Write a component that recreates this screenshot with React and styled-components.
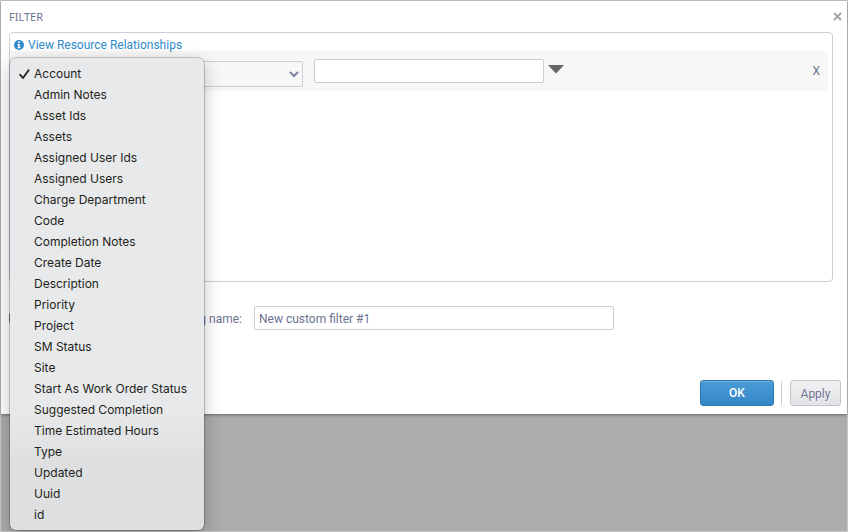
import React, { useState } from 'react'
import styled, { createGlobalStyle } from 'styled-components'

const FIELDS = [
    'Account',
    'Admin Notes',
    'Asset Ids',
    'Assets',
    'Assigned User Ids',
    'Assigned Users',
    'Charge Department',
    'Code',
    'Completion Notes',
    'Create Date',
    'Description',
    'Priority',
    'Project',
    'SM Status',
    'Site',
    'Start As Work Order Status',
    'Suggested Completion',
    'Time Estimated Hours',
    'Type',
    'Updated',
    'Uuid',
    'id',
]

const App = () => {
    const [field, setField] = useState('Account')
    const [value, setValue] = useState('')
    const [save, setSave] = useState(false)
    const [name, setName] = useState('New custom filter #1')

    return (
        <Page>
            <GlobalStyle />
            <Dialog role="dialog" aria-labelledby="filter-title">
                <Header>
                    <Title id="filter-title">FILTER</Title>
                    <CloseButton type="button" aria-label="Close">
                        <svg width="9" height="9" viewBox="0 0 9 9">
                            <path d="M1 1L8 8M8 1L1 8" stroke="#a3a3a3" strokeWidth="1.8" />
                        </svg>
                    </CloseButton>
                </Header>

                <Panel>
                    <HelpLink href="#relationships">
                        <svg width="10" height="10" viewBox="0 0 10 10">
                            <circle cx="5" cy="5" r="5" fill="#2f8bcc" />
                            <path d="M4.1 1.4h1.8v1.5H4.1zM3.4 4h2.5v3.2h.8v1.1H3.4V7.2h.8V5.1h-.8z" fill="#fff" />
                        </svg>
                        View Resource Relationships
                    </HelpLink>
                    <Rule>
                        <SelectWrap>
                            <FieldSelect aria-label="Field" value={field} onChange={e => setField(e.target.value)}>
                                {FIELDS.map(item => <option key={item}>{item}</option>)}
                            </FieldSelect>
                            <Chevron width="10" height="7" viewBox="0 0 10 7">
                                <path d="M1 1L5 5L9 1" fill="none" stroke="#7c83a3" strokeWidth="2" />
                            </Chevron>
                            <Menu role="listbox" aria-label="Field">
                                {FIELDS.map(item => (
                                    <MenuItem
                                        key={item}
                                        role="option"
                                        aria-selected={item === field}
                                        onClick={() => setField(item)}
                                    >
                                        <Tick>
                                            {item === field && (
                                                <svg width="11" height="10" viewBox="0 0 11 10">
                                                    <path
                                                        d="M1.2 5.8L4 9L9.6 1.2"
                                                        fill="none"
                                                        stroke="#1e1f20"
                                                        strokeWidth="1.8"
                                                        strokeLinecap="round"
                                                        strokeLinejoin="round"
                                                    />
                                                </svg>
                                            )}
                                        </Tick>
                                        {item}
                                    </MenuItem>
                                ))}
                            </Menu>
                        </SelectWrap>
                        <ValueInput aria-label="Value" value={value} onChange={e => setValue(e.target.value)} />
                        <DropButton type="button" aria-label="Show values">
                            <svg width="16" height="9" viewBox="0 0 16 9">
                                <path d="M0 0H16L8 8.5z" fill="#666" />
                            </svg>
                        </DropButton>
                        <RemoveButton type="button">X</RemoveButton>
                    </Rule>
                </Panel>

                <NameRow>
                    <Checkbox
                        type="checkbox"
                        aria-label="Save this filter"
                        checked={save}
                        onChange={e => setSave(e.target.checked)}
                    />
                    <NameLabel htmlFor="filter-name">Save filter using name:</NameLabel>
                    <NameInput id="filter-name" value={name} onChange={e => setName(e.target.value)} />
                </NameRow>

                <Footer>
                    <OkButton type="button">OK</OkButton>
                    <Divider />
                    <ApplyButton type="button">Apply</ApplyButton>
                </Footer>
            </Dialog>
        </Page>
    )
}

export default App


const GlobalStyle = createGlobalStyle`
* {
    box-sizing: border-box;
}

body {
    margin: 0;
}

body, button, input, select {
    font-family: Tahoma, Roboto, sans-serif;
    font-size: 12px;
    color: #6b7391;
}
`;

const Page = styled.div`
min-height: 100vh;
border: 1px solid #c8c8c8;
background-color: #acacac;
`;

const Dialog = styled.div`
background-color: white;
padding: 0 5px 8px 8px;
box-shadow: 0 1px 3px rgba(0, 0, 0, 0.4);
`;

const Header = styled.div`
display: flex;
align-items: center;
justify-content: space-between;
height: 31px;
`;

const Title = styled.h1`
margin: 0;
font-family: "Noto Sans", sans-serif;
font-size: 11px;
font-weight: normal;
`;

const PlainButton = styled.button`
display: flex;
padding: 0;
border: none;
background: none;
cursor: pointer;
`;

const CloseButton = styled(PlainButton)``;

const Panel = styled.div`
min-height: 250px;
margin-right: 9px;
padding: 4px;
border: 1px solid #cbccd8;
border-radius: 4px;
`;

const HelpLink = styled.a`
display: flex;
align-items: center;
gap: 4px;
height: 14px;
color: #2f8bcc;
text-decoration: none;
line-height: 14px;
padding-top: 1px;
`;

const Rule = styled.div`
display: flex;
align-items: flex-start;
height: 40px;
margin-left: -4px;
padding: 8px 8px 0 0;
background-color: #f7f7f7;
`;

const SelectWrap = styled.div`
position: relative;
flex: none;
width: 293px;
padding-top: 2px;
`;

const FieldSelect = styled.select`
appearance: none;
display: block;
width: 100%;
height: 26px;
padding: 0 24px 0 6px;
border: 1px solid #cbccd8;
border-radius: 2px;
background: #f7f7f7;
`;

const Chevron = styled.svg`
position: absolute;
top: 12px;
right: 4px;
pointer-events: none;
`;

const Menu = styled.ul`
position: absolute;
top: -1px;
left: 0;
z-index: 10;
width: 194px;
margin: 0;
padding: 5px 0;
border-radius: 6px;
list-style: none;
background: linear-gradient(#e8e9eb 74%, #dedfe1 86%);
box-shadow: 0 0 0 1px rgba(0, 0, 0, 0.2), 0 5px 18px rgba(0, 0, 0, 0.25);
color: #1e1f20;
font-family: Inter, sans-serif;
font-size: 12px;
`;

const MenuItem = styled.li`
display: flex;
align-items: center;
height: 21px;
white-space: nowrap;
cursor: default;
`;

const Tick = styled.span`
display: flex;
width: 24px;
padding-left: 9px;
`;

const TextInput = styled.input`
height: 24px;
padding: 2px 4px 0;
border: 1px solid #cbccd8;
border-radius: 2px;
background: white;
outline: 0;
`;

const ValueInput = styled(TextInput)`
flex: 0 1 230px;
margin-left: 11px;
`;

const DropButton = styled(PlainButton)`
margin: 6px 0 0 4px;
`;

const RemoveButton = styled(PlainButton)`
margin-left: auto;
padding-top: 5px;
`;

const NameRow = styled.div`
display: flex;
align-items: center;
margin-top: 24px;
`;

const Checkbox = styled.input`
width: 12px;
height: 12px;
margin: 0;
`;

const NameLabel = styled.label`
width: 221px;
margin-right: 12px;
padding-top: 2px;
text-align: right;
`;

const NameInput = styled(TextInput)`
flex: 0 1 360px;
`;

const Footer = styled.div`
display: flex;
align-items: center;
justify-content: flex-end;
margin: 50px 1px 0 0;
`;

const Button = styled.button`
height: 26px;
padding: 0;
border-radius: 3px;
`;

const OkButton = styled(Button)`
width: 74px;
border: 1px solid #2f78b0;
background: linear-gradient(#4a9cd8, #3486c6);
box-shadow: inset 0 1px 0 rgba(255, 255, 255, 0.2);
color: white;
font-weight: 500;
`;

const Divider = styled.div`
width: 1px;
height: 24px;
margin: 0 8px 0 7px;
background-color: #cbccd8;
`;

const ApplyButton = styled(Button)`
width: 51px;
padding-top: 2px;
border: 1px solid #bfc1cc;
background: linear-gradient(#f1f1f3, #e2e3e6);
text-shadow: 0 1px 0 white;
`;
